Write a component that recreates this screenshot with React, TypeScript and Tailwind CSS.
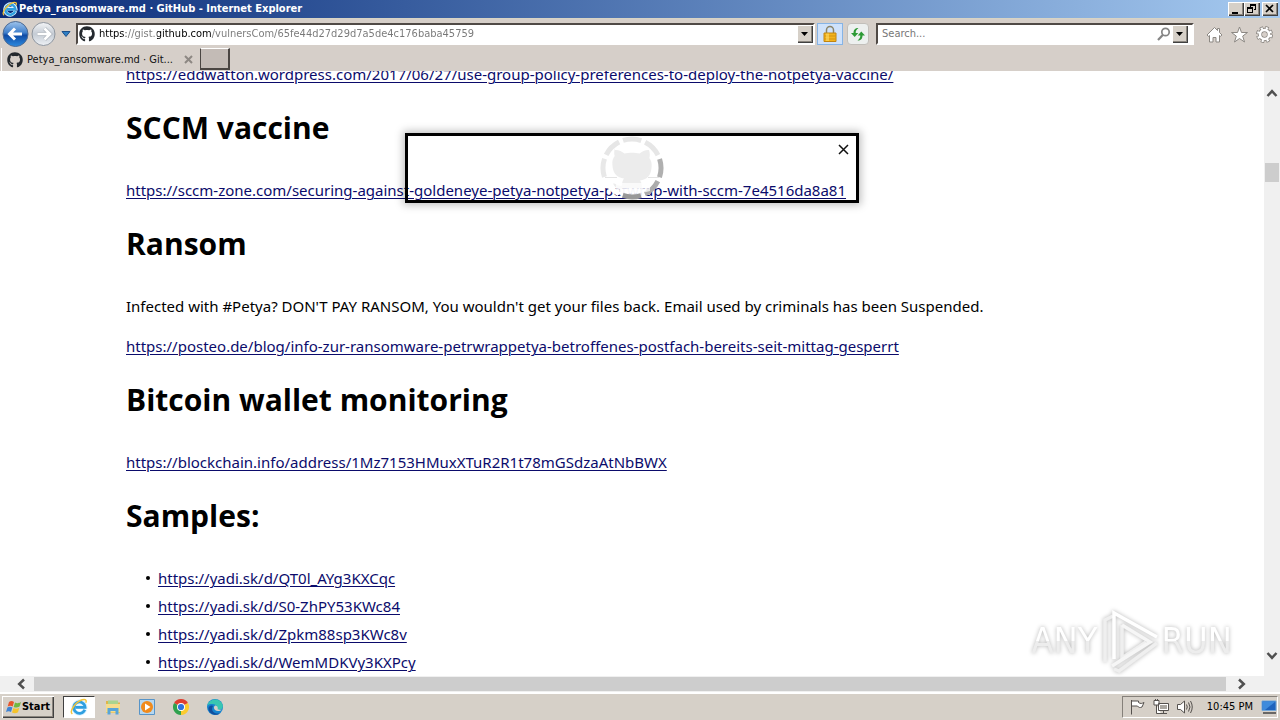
import type { ReactNode } from "react";
import { FaGithub } from "react-icons/fa";

const raised =
  "flex items-center justify-center bg-[#d6d0c8] shadow-[inset_1px_1px_0_#ffffff,inset_-1px_-1px_0_#404040,inset_-2px_-2px_0_#8a857e]";

const samples = ["QT0l_AYg3KXCqc", "S0-ZhPY53KWc84", "Zpkm88sp3KWc8v", "WemMDKVy3KXPcy"];

function IeLogo({ className }: { className: string }) {
  return (
    <svg viewBox="0 0 20 20" className={className} aria-hidden="true">
      <path d="M16.8 12.6A6.6 6.6 0 1 1 17 9.6H6.5" fill="none" stroke="#d9f1ff" strokeWidth="4.6" />
      <path d="M16.4 13A6.3 6.3 0 1 1 16.8 10.4H6" fill="none" stroke="#2f9fe0" strokeWidth="3" />
      <path d="M2.6 17.8C-1.5 14.5 7 4 13.500 2C17.600 .8 18.600 2.500 17.600 5.200" fill="none" stroke="#f3c43a" strokeWidth="1.6" />
    </svg>
  );
}

function TitleBar() {
  return (
    <header className="flex h-[18px] shrink-0 items-center bg-linear-to-r from-[#0a2a78] to-[#a6caf0] pl-0.5 pr-0.5">
      <IeLogo className="size-4" />
      <h1 className="ml-px flex-1 font-['DejaVu_Sans_Condensed','DejaVu_Sans',sans-serif] text-[11px] leading-4 font-bold text-white">
        Petya_ransomware.md · GitHub - Internet Explorer
      </h1>
      <button aria-label="Minimize" className={`${raised} h-[14px] w-4`}>
        <svg viewBox="0 0 16 14" className="h-[14px] w-4"><path d="M4 10h6v2H4z" /></svg>
      </button>
      <button aria-label="Restore" className={`${raised} h-[14px] w-4`}>
        <svg viewBox="0 0 16 14" className="h-[14px] w-4" fill="none" stroke="#000" shapeRendering="crispEdges">
          <path d="M6.500 5V2.500h5v5H10M6 3h6M3.500 5.500h5v5h-5zM3 6h6" />
        </svg>
      </button>
      <button aria-label="Close" className={`${raised} ml-0.5 h-[14px] w-4`}>
        <svg viewBox="0 0 16 14" className="h-[14px] w-4" stroke="#000" strokeWidth="1.700"><path d="M4 3l7 7M11 3l-7 7" /></svg>
      </button>
    </header>
  );
}

function DropButton({ label }: { label: string }) {
  return (
    <button aria-label={label} className={`${raised} h-[18px] w-4 shrink-0`}>
      <svg viewBox="0 0 8 4" className="h-1 w-2"><path d="M0 0h7L3.500 4z" /></svg>
    </button>
  );
}

function NavBar() {
  return (
    <div className="flex h-[30px] shrink-0 items-center border-t border-[#d8d4c4] pr-[7px]">
      <button aria-label="Back" className="ml-0.5 size-7">
        <svg viewBox="0 0 28 28">
          <defs>
            <linearGradient id="back" x2="0" y2="1">
              <stop offset="0" stopColor="#9fc4ec" /><stop offset=".45" stopColor="#3f7fcb" /><stop offset=".55" stopColor="#0f4ba5" /><stop offset="1" stopColor="#2d8be0" />
            </linearGradient>
          </defs>
          <circle cx="13.500" cy="14" r="12.500" fill="url(#back)" stroke="#4d6a92" />
          <path d="M20 14H8M13 8.500L7.500 14l5.500 5.500" fill="none" stroke="#fff" strokeWidth="3" />
        </svg>
      </button>
      <button aria-label="Forward" className="size-7">
        <svg viewBox="0 0 28 28">
          <defs>
            <linearGradient id="fwd" x2="0" y2="1">
              <stop offset="0" stopColor="#f4f5f7" /><stop offset=".5" stopColor="#c4cbd4" /><stop offset="1" stopColor="#eef1f5" />
            </linearGradient>
          </defs>
          <circle cx="13.500" cy="14" r="11.500" fill="url(#fwd)" stroke="#8f969f" />
          <path d="M7.500 14h12M14.500 8.500L20 14l-5.500 5.500" fill="none" stroke="#aeb4bc" strokeWidth="4" />
          <path d="M7.500 14h12M14.500 8.500L20 14l-5.500 5.500" fill="none" stroke="#fff" strokeWidth="2.600" />
        </svg>
      </button>
      <button aria-label="Recent pages" className="ml-0.5 flex w-3 justify-center">
        <svg viewBox="0 0 10 6" className="h-1.5 w-2.5"><path d="M1 .5h8L5 5.500z" fill="#2f7fc4" stroke="#1b4f8a" /></svg>
      </button>
      <div className="ml-1 flex h-[22px] flex-1 items-center border-2 border-t-[#504a46] border-r-white border-b-white border-l-[#504a46] bg-white">
        <FaGithub className="ml-px size-4 shrink-0 text-[#24292e]" />
        <input
          aria-label="Address"
          readOnly
          value="https://gist.github.com/vulnersCom/65fe44d27d29d7a5de4c176baba45759"
          className="ml-1 min-w-0 flex-1 bg-[linear-gradient(90deg,#000_27px,#777_27px,#777_58px,#000_58px,#000_112px,#777_112px)] bg-clip-text font-['DejaVu_Sans_Condensed','DejaVu_Sans',sans-serif] text-[11px] leading-4 text-transparent outline-none"
        />
        <DropButton label="Show address list" />
      </div>
      <button aria-label="Security report" className="ml-0.5 flex h-[22px] w-[26px] items-center justify-center border border-[#86b4e6] bg-[#cfe2fb]">
        <svg viewBox="0 0 14 18" className="h-[18px] w-3.5">
          <path d="M3.500 9V5a3.500 3.500 0 0 1 7 0v4" fill="none" stroke="#8b8468" strokeWidth="1.500" />
          <path d="M1 8h12v8.500H1z" fill="#f4b41c" stroke="#c08410" />
          <path d="M1.500 11h11M1.500 14h11" stroke="#d39312" />
          <path d="M3 8.500h3v7.500H3z" fill="#ffdc68" opacity=".6" />
        </svg>
      </button>
      <button aria-label="Refresh" className="ml-1 flex h-[22px] w-[22px] items-center justify-center rounded-sm border border-[#c2bfba] bg-[#edf0ef]">
        <svg viewBox="0 0 16 16" className="size-4" fill="#2c9a35">
          <path d="M8.500 2C5 2 3.500 4 3.500 7H1l3.700 4L8.300 7H5.700c0-2 .5-3.300 2.800-5z" />
          <path d="M7.500 14.500c3.500 0 5-2 5-5H15l-3.700-4L7.700 9.500h2.600c0 2-.5 3.300-2.800 5z" />
        </svg>
      </button>
      <div className="ml-[7px] flex h-[22px] w-[318px] items-center border-2 border-t-[#504a46] border-r-white border-b-white border-l-[#504a46] bg-white">
        <input
          aria-label="Search"
          placeholder="Search..."
          className="ml-1 min-w-0 flex-1 font-['DejaVu_Sans_Condensed','DejaVu_Sans',sans-serif] text-[11px] leading-4 outline-none placeholder:text-[#777]"
        />
        <button aria-label="Go" className="mr-px">
          <svg viewBox="0 0 14 14" className="size-3.5" fill="none" stroke="#858585">
            <circle cx="8.500" cy="5" r="3.700" strokeWidth="1.700" /><path d="M6 7.800L1 13" strokeWidth="2.200" />
          </svg>
        </button>
        <DropButton label="Search options" />
        <span className="w-1" />
      </div>
      <div className="ml-3 flex items-center gap-2 pt-0.5 text-[#8c8883]">
        <button aria-label="Home" className="size-[17px]">
          <svg viewBox="0 0 17 17" fill="#fff" stroke="currentColor"><path d="M8.500 1.500L1 9l1.500 1.300L3.500 9.500V16H7v-4.500h3V16h3.500V9.500l1 .8L16 9l-2.500-2.500v-4h-2v2z" /></svg>
        </button>
        <button aria-label="Favorites" className="size-[17px]">
          <svg viewBox="0 0 17 17" fill="#fff" stroke="currentColor"><path d="M8.500 1l2 5.500h6l-4.800 3.600 1.800 5.900-5-3.500-5 3.500 1.800-5.900L.5 6.500h6z" /></svg>
        </button>
        <button aria-label="Tools" className="size-[17px]">
          <svg viewBox="0 0 17 17" fill="none">
            <circle cx="8.500" cy="8.500" r="6.500" stroke="#8c8883" strokeWidth="4" strokeDasharray="3.100 2" />
            <circle cx="8.500" cy="8.500" r="4.600" stroke="#8c8883" strokeWidth="4.200" />
            <circle cx="8.500" cy="8.500" r="6.300" stroke="#fff" strokeWidth="2.600" strokeDasharray="2 2.950" strokeDashoffset="-.5" />
            <circle cx="8.500" cy="8.500" r="4.500" stroke="#fff" strokeWidth="2.600" />
          </svg>
        </button>
      </div>
    </div>
  );
}

function TabBar() {
  return (
    <div className="flex h-[23px] shrink-0 items-start pl-px">
      <div className="flex h-[23px] w-[199px] items-center border-l border-white pr-1 pl-[5px]">
        <FaGithub className="size-4 text-[#24292e]" />
        <span className="ml-1 flex-1 truncate font-['DejaVu_Sans_Condensed','DejaVu_Sans',sans-serif] text-[11px] leading-4 text-[#111]">
          Petya_ransomware.md · Git...
        </span>
        <button aria-label="Close tab" className="flex w-4 justify-center">
          <svg viewBox="0 0 9 9" className="size-[9px]" stroke="#8d8883" strokeWidth="2"><path d="M1 1l7 7M8 1L1 8" /></svg>
        </button>
      </div>
      <button aria-label="New tab" className="h-[22px] w-[30px] border-t border-r-2 border-b-2 border-l border-t-white border-r-[#4a4542] border-b-[#4a4542] border-l-[#4a4542] bg-[#c3bbb6]" />
    </div>
  );
}

function PageLink({ href }: { href: string }) {
  return (
    <a href={href} className="whitespace-nowrap text-[#0b0b6b] underline decoration-1 underline-offset-2">
      {href}
    </a>
  );
}

function Section({ title, children }: { title: string; children: ReactNode }) {
  return (
    <section className="pt-[22px]">
      <h2 className="font-['Open_Sans','Noto_Sans',sans-serif] text-[30px] leading-10 font-bold">{title}</h2>
      <div className="flex flex-col gap-4 pt-[30px]">{children}</div>
    </section>
  );
}

function Spinner() {
  const colors = ["#e6e6e6", "#e6e6e6", "#b0b0b0", "#acacac", "#989898", "#ffffff", "#e8e8e8", "#e6e6e6"];
  return (
    <svg viewBox="0 0 64 64" className="size-16" role="img" aria-label="Loading">
      <path d="M20 53h26v6c-8 4-18 4-26 0z" fill="#fff" opacity=".85" />
      <path d="M5 41.500h12M48 41.500h11" stroke="#e4e4e4" />
      {colors.map((color, i) => (
        <circle
          key={i}
          cx="32"
          cy="32"
          r="29"
          fill="none"
          stroke={color}
          strokeWidth="5"
          strokeDasharray="18.500 170"
          transform={`rotate(${i * 45 - 108} 32 32)`}
        />
      ))}
      <path
        d="M15 14c3-.5 7 1.500 9.500 3.500 4-1 11-1 15 0C42 15.500 46 13.500 49 14c1 3 1 6 .3 8 2 2.500 2.600 5 2.300 9-.5 9-5 12.500-11.600 13.500 1.500 2 2 4 2 8H22c-5 1-7-1-9-5 4 0 4 3 9 2 0-3 .5-5 2-7-6.600-1-11.100-4.500-11.600-13.500-.3-4 .3-6.500 2.300-9-.7-2-.7-5 .3-8z"
        fill="#ececec"
      />
      <path d="M16 47h34v8c-10 3-24 3-34 0z" fill="#fff" opacity=".75" />
    </svg>
  );
}

function Watermark() {
  const word = "bg-linear-to-b from-white from-50% to-[#ededed] to-50% bg-clip-text text-transparent";
  return (
    <div
      aria-label="ANY.RUN"
      className="absolute right-8 bottom-[3px] flex items-center gap-0.5 font-['DejaVu_Sans_Condensed',sans-serif] text-[36px] leading-[64px] drop-shadow-[0_0_2px_#b4b4b4]"
    >
      <span className={word}>ANY</span>
      <svg viewBox="0 0 60 64" className="h-16 w-[60px]" fill="none" strokeWidth="3.500">
        <path d="M5 53V11l8-4M14 60l5 2L57 34" stroke="#efefef" />
        <path d="M22 16v33L46 33" stroke="#efefef" />
        <path d="M14 50V4L57 28" stroke="#fff" />
        <path d="M22 16L50 33 12 57" stroke="#f6f6f6" />
      </svg>
      <span className={word}>RUN</span>
    </div>
  );
}

function Chevron({ className }: { className: string }) {
  return (
    <svg viewBox="0 0 12 8" className={className} fill="none" stroke="#505050" strokeWidth="2.500">
      <path d="M1.500 7L6 2.200 10.500 7" />
    </svg>
  );
}

function Page() {
  return (
    <div className="flex min-h-0 flex-1 flex-col">
      <div className="flex min-h-0 flex-1">
        <main className="relative flex-1 overflow-hidden bg-white font-['Noto_Sans','Open_Sans',sans-serif] text-[15px] leading-6 text-black">
          <article className="-mt-[9px] pl-[126px]">
            <p><PageLink href="https://eddwatton.wordpress.com/2017/06/27/use-group-policy-preferences-to-deploy-the-notpetya-vaccine/" /></p>
            <Section title="SCCM vaccine">
              <p><PageLink href="https://sccm-zone.com/securing-against-goldeneye-petya-notpetya-petwrap-with-sccm-7e4516da8a81" /></p>
            </Section>
            <Section title="Ransom">
              <p>Infected with #Petya? DON'T PAY RANSOM, You wouldn't get your files back. Email used by criminals has been Suspended.</p>
              <p><PageLink href="https://posteo.de/blog/info-zur-ransomware-petrwrappetya-betroffenes-postfach-bereits-seit-mittag-gesperrt" /></p>
            </Section>
            <Section title="Bitcoin wallet monitoring">
              <p><PageLink href="https://blockchain.info/address/1Mz7153HMuxXTuR2R1t78mGSdzaAtNbBWX" /></p>
            </Section>
            <Section title="Samples:">
              <ul className="flex flex-col gap-1">
                {samples.map((id) => (
                  <li key={id} className="flex items-center">
                    <span className="ml-5 mr-2 size-1 rounded-full bg-black" />
                    <PageLink href={`https://yadi.sk/d/${id}`} />
                  </li>
                ))}
              </ul>
            </Section>
          </article>
          <div role="dialog" aria-label="Loading" className="absolute top-[62px] left-1/2 flex h-[70px] w-[454px] -translate-x-1/2 items-center justify-center border-3 border-black shadow-[0_0_8px_2px_rgba(0,0,0,0.25)]">
            <Spinner />
            <button aria-label="Close dialog" className="absolute top-2 right-[7px] size-[11px]">
              <svg viewBox="0 0 11 11" stroke="#111" strokeWidth="1.500"><path d="M1 1l9 9M10 1l-9 9" /></svg>
            </button>
          </div>
          <Watermark />
        </main>
        <div className="flex w-4 shrink-0 flex-col items-center bg-[#f0f0f0] pt-[18px] pb-4">
          <Chevron className="h-2 w-3" />
          <div className="mt-[66px] h-[19px] w-3.5 bg-[#cdcdcd]" />
          <div className="flex-1" />
          <Chevron className="h-2 w-3 rotate-180" />
        </div>
      </div>
      <div className="flex h-4 shrink-0 items-center bg-[#f0f0f0] pr-8 pl-[15px]">
        <Chevron className="h-2 w-3 -rotate-90" />
        <div className="ml-[7px] h-3.5 flex-1 bg-[#cdcdcd]" />
        <Chevron className="ml-2.5 h-2 w-3 rotate-90" />
      </div>
    </div>
  );
}

function TaskBar() {
  return (
    <footer className="flex h-7 shrink-0 items-center border-t-2 border-white bg-[#d6d0c8] font-['DejaVu_Sans_Condensed','DejaVu_Sans',sans-serif] text-[11px] leading-4">
      <button className={`${raised} ml-0.5 h-[22px] w-[52px] font-bold`}>
        <svg viewBox="0 0 16 16" className="size-4">
          <path d="M3 3c2-1.500 3.500-1 5 0L6.700 7.500C5 6.500 3.500 6.500 1.700 7.500z" fill="#e8552b" />
          <path d="M9 3.500c2 1 3.500 1 6-.5l-1.400 4.600c-2 1.200-4 1.200-5.900.4z" fill="#72b840" />
          <path d="M1.400 8.500c2-1.200 3.500-1 5 0L5 13c-1.500-1-3-1-5 0z" fill="#3f83d4" />
          <path d="M7.400 9c2 1 3.800 1 5.900-.3L12 13.300c-2 1.200-4 1.200-6 .2z" fill="#f5c32c" />
        </svg>
        Start
      </button>
      <nav aria-label="Pinned apps" className="flex flex-1 items-center pl-[9px]">
        <button aria-label="Internet Explorer" className="flex h-[22px] w-8 items-center justify-center border border-t-[#404040] border-r-white border-b-white border-l-[#404040] bg-white">
          <IeLogo className="size-[18px]" />
        </button>
        <button aria-label="File Explorer" className="ml-2.5 flex w-4 justify-center">
          <svg viewBox="0 0 16 16" className="size-4">
            <path d="M1 2h6l1 1.500h7V14H1z" fill="#dfb54a" /><path d="M3 1.500h10v4H3z" fill="#a9d48e" /><path d="M1 5h14v8.500H1z" fill="#f5dc8c" /><path d="M2.500 15.500V9h11v6.500h-3V12h-5v3.500z" fill="#58a5d8" />
          </svg>
        </button>
        <button aria-label="Media Player" className="ml-[18px] w-4">
          <svg viewBox="0 0 16 16" className="size-4">
            <path d="M.5 .5h15v15H.5z" fill="#b6d7f0" stroke="#5794c8" /><circle cx="8" cy="8" r="6" fill="#f08a1c" /><path d="M6 4.500v7L11.500 8z" fill="#fff" />
          </svg>
        </button>
        <button aria-label="Chrome" className="ml-[18px] w-4">
          <svg viewBox="0 0 16 16" className="size-4">
            <path d="M8 8L1.070 4A8 8 0 0 1 14.930 4z" fill="#df3e30" /><path d="M8 8l6.930-4A8 8 0 0 1 8 16z" fill="#fbcb2f" /><path d="M8 8v8A8 8 0 0 1 1.070 4z" fill="#30a14e" /><circle cx="8" cy="8" r="4" fill="#fff" /><circle cx="8" cy="8" r="3.100" fill="#2f72de" />
          </svg>
        </button>
        <button aria-label="Edge" className="ml-[18px] w-4">
          <svg viewBox="0 0 16 16" className="size-4">
            <circle cx="8" cy="8" r="8" fill="#1583cf" /><path d="M.3 6.500C2-1 13-2 15.700 6c.8 4-2.500 5.300-6 4.500C12 6 5 3 .3 6.500z" fill="#39c6b2" /><path d="M6 7c-3 5 2 9 7.500 7C9 18 1 15 1.500 9 2 7 4 6 6 7z" fill="#124e9c" /><path d="M8 6.500c-1.500 1-1.500 3 0 4.500 2 1.500 5 1 7-.3-1-.2-3 .2-4.500-.4 1-1.500-.5-4-2.500-3.800z" fill="#d6d0c8" />
          </svg>
        </button>
      </nav>
      <div className="mr-0.5 flex h-[22px] items-center border border-t-[#85807a] border-r-white border-b-white border-l-[#85807a] pl-1.5">
        <div className="flex items-center gap-2">
          <svg viewBox="0 0 16 16" className="size-4" fill="#fff" stroke="#55514e"><path d="M2.500 1v14.500M2.500 2h7v1.500c2 1.500 3.500 1 5.500 0L13 8c-2 1-3.500.5-4.500-1h-6" /></svg>
          <svg viewBox="0 0 16 16" className="size-4" fill="#fff" stroke="#55514e"><path d="M5.500 4.500h10v7h-10zM8 14.500h6M10.500 12v2M1 1.500h5V6H1zM3.500 6v8.500H8M2.500 0v2M4.500 0v2" /><path d="M7 6h7v4H7z" fill="#aaa6a0" stroke="none" /></svg>
          <svg viewBox="0 0 16 16" className="size-4" fill="none" stroke="#55514e"><path d="M.5 5.500h3L7.500 2v12l-4-3.500h-3z" fill="#fff" /><path d="M9.500 5.500q1.500 2.500 0 5M11.500 3.500q3 4.500 0 9M13.500 2q3.500 6 0 12" /></svg>
        </div>
        <time className="ml-3.5">10:45 PM</time>
        <svg viewBox="0 0 16 14" className="ml-2 h-3.5 w-4"><path d="M1 1h14v9.500H1z" fill="#1f63bd" stroke="#75a7d8" /><path d="M1.500 1.500h13L4 10H1.500z" fill="#3f8bdc" /><path d="M2 13h13" stroke="#444" strokeWidth="1.500" /></svg>
      </div>
    </footer>
  );
}

export default function App() {
  return (
    <div className="flex h-screen flex-col overflow-hidden bg-[#d6cfc9]">
      <TitleBar />
      <NavBar />
      <TabBar />
      <Page />
      <TaskBar />
    </div>
  );
}
